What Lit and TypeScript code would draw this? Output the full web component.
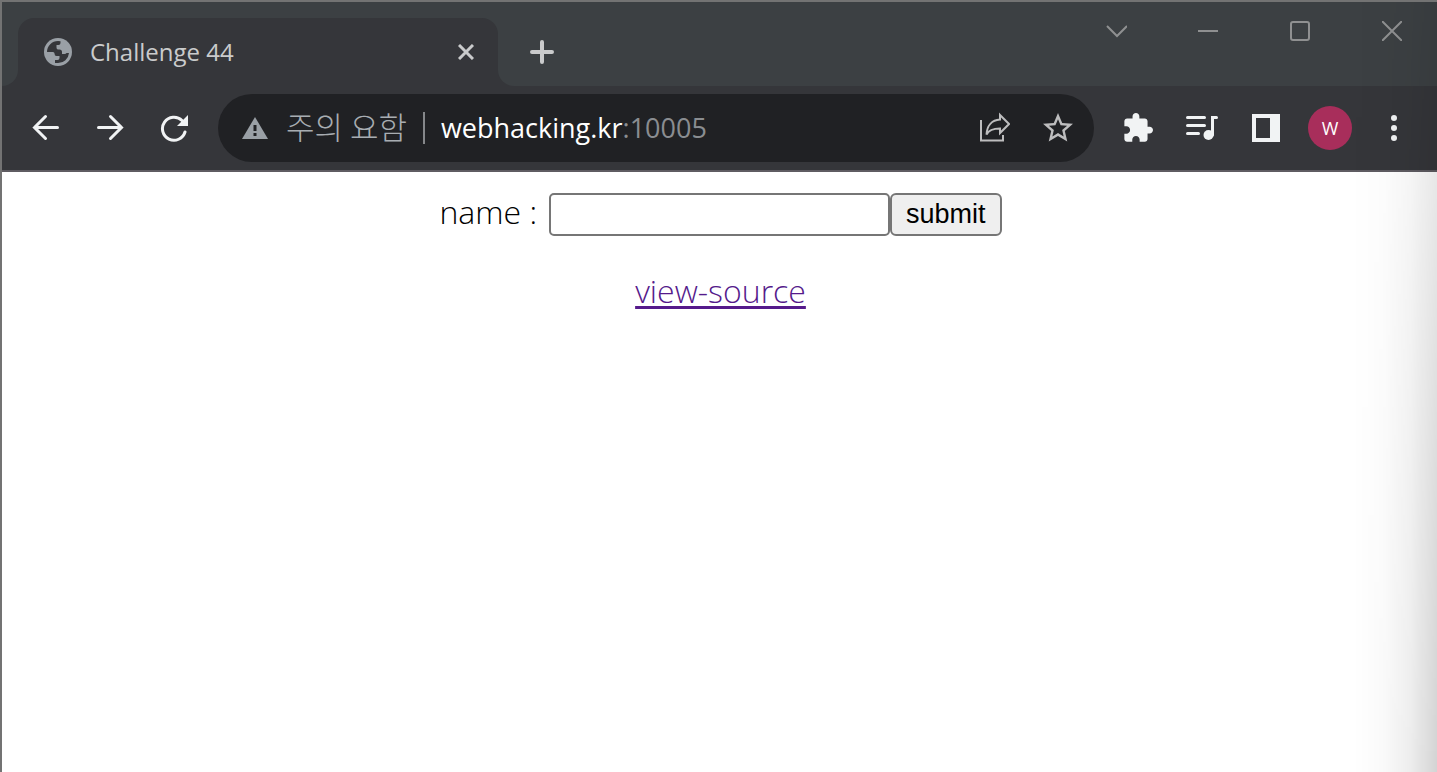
import { LitElement, html, css, svg } from "lit";
import { customElement, state } from "lit/decorators.js";

const icons = {
  globe: svg`<circle cx="14" cy="14" r="14" fill="#9aa0a6"/><path d="M3 14A11 11 0 0 1 14 3L16.500 3.300V5Q16.500 7 14.500 7H12.500V9.500Q12.500 11.500 14 11.500H15.500Q18 11.500 18 14V16H20.500Q22 16 22.500 15H25A11 11 0 0 1 14 25H11V22H13.500Q15.500 22 15.500 20V18H12.500Q10.500 18 10.500 15.500Q10.500 14 9 14Z" fill="#35363a"/>`,
};

@customElement("app-root")
export class AppRoot extends LitElement {
  @state() private name = "";

  static styles = css`
    :host {
      display: block;
      font-family: "Open Sans", "Noto Sans CJK KR", sans-serif;
    }
    * { box-sizing: border-box; }
    button { font: inherit; cursor: pointer; }
    svg { display: block; flex: none; }
    .window {
      position: relative;
      display: flex;
      flex-direction: column;
      min-height: 100vh;
      overflow: hidden;
      background: #fff;
      border: solid #737373;
      border-width: 2px 0 0 2px;
    }
    .shade {
      position: absolute;
      top: 0;
      right: 0;
      bottom: 0;
      width: 84px;
      pointer-events: none;
      background: linear-gradient(to right, rgba(0, 0, 0, 0), rgba(0, 0, 0, 0.02) 35%, rgba(0, 0, 0, 0.07) 68%, rgba(0, 0, 0, 0.17));
      -webkit-mask-image: linear-gradient(rgba(0, 0, 0, 0.4), rgba(0, 0, 0, 0.6) 30%, rgba(0, 0, 0, 0.8) 60%, #000);
      mask-image: linear-gradient(rgba(0, 0, 0, 0.4), rgba(0, 0, 0, 0.6) 30%, rgba(0, 0, 0, 0.8) 60%, #000);
    }
    .tabs {
      display: flex;
      height: 84px;
      background: linear-gradient(#3c4043 50%, #35363a 50%);
    }
    .edge {
      width: 16px;
      background: #3c4043;
      border-bottom-right-radius: 16px;
    }
    .tab {
      display: flex;
      align-items: center;
      width: 480px;
      margin-top: 16px;
      padding: 0 20px 0 26px;
      border-radius: 16px 16px 0 0;
      background: #35363a;
      color: #cacbcc;
    }
    .title {
      flex: 1;
      margin-left: 18px;
      font-size: 24px;
      line-height: 32px;
      white-space: nowrap;
    }
    .icon {
      display: flex;
      align-items: center;
      justify-content: center;
      padding: 0;
      border: 0;
      background: none;
      color: #f1f3f4;
    }
    .small { width: 24px; height: 24px; color: #cacbcc; }
    .strip {
      display: flex;
      flex: 1;
      justify-content: space-between;
      background: #3c4043;
      border-bottom-left-radius: 16px;
    }
    .add { width: 56px; margin: 16px 0 0 16px; color: #cacbcc; }
    .controls { display: flex; margin-right: -1px; }
    .control { width: 92px; height: 58px; color: #8f9091; }
    .toolbar {
      display: flex;
      align-items: center;
      height: 86px;
      padding: 0 11px 0 12px;
      background: #35363a;
      border-bottom: 2px solid #5f5c62;
    }
    .tool { width: 64px; height: 64px; }
    .address {
      display: flex;
      flex: 1;
      align-items: center;
      height: 68px;
      margin: 0 12px;
      padding: 0 4px 0 24px;
      border-radius: 34px;
      background: #202124;
    }
    .notice {
      margin-left: 18px;
      padding-bottom: 4px;
      font: 300 31px/40px "Noto Sans CJK KR", sans-serif;
      color: #a8adb2;
      white-space: nowrap;
    }
    .divider {
      width: 2px;
      height: 32px;
      margin: 0 16px;
      background: #85878a;
    }
    .url {
      flex: 1;
      font-size: 27px;
      line-height: 40px;
      color: #fff;
      white-space: nowrap;
    }
    .port { color: #8a8d91; }
    .inner { color: #bdbdbe; }
    .avatar {
      display: flex;
      align-items: center;
      justify-content: center;
      width: 44px;
      height: 44px;
      border-radius: 50%;
      background: #a82e5b;
      color: #fff;
      font-size: 18px;
      font-weight: 500;
      line-height: 24px;
    }
    .page {
      display: flex;
      flex-direction: column;
      align-items: center;
      padding: 21px 14px 21px 16px;
      font-size: 32px;
      font-weight: 300;
      line-height: 36px;
      color: #000;
    }
    form { display: flex; align-items: center; }
    label { margin-right: 12px; padding-bottom: 6px; white-space: pre; }
    .field {
      width: 341px;
      height: 43px;
      padding: 2px 4px;
      border: 2px solid #767676;
      border-radius: 5px;
      background: #fff;
      font: 27px "Liberation Sans", Arial, sans-serif;
    }
    .submit {
      height: 43px;
      padding: 0 14px 2px;
      border: 2px solid #767676;
      border-radius: 6px;
      background: #efefef;
      color: #000;
      font: 27px/36px "Liberation Sans", Arial, sans-serif;
    }
    .source {
      margin-top: 37px;
      color: #551a8b;
      text-decoration-thickness: 3px;
      text-underline-offset: 3px;
    }
  `;

  render() {
    return html`
      <div class="window">
        <div class="tabs">
          <div class="edge"></div>
          <div class="tab">
            <svg width="28" height="28" viewBox="0 0 28 28">${icons.globe}</svg>
            <span class="title">Challenge 44</span>
            <button class="icon small" aria-label="Close tab">
              <svg width="16" height="16" viewBox="0 0 16 16" fill="none" stroke="currentColor" stroke-width="3"><path d="M1 1 15 15M15 1 1 15"/></svg>
            </button>
          </div>
          <div class="strip">
            <button class="icon add" aria-label="New tab">
              <svg width="24" height="24" viewBox="0 0 24 24" stroke="currentColor" stroke-width="4" stroke-linecap="round"><path d="M12 2V22M2 12H22"/></svg>
            </button>
            <div class="controls">
              <button class="icon control" aria-label="Search tabs">
                <svg width="22" height="22" viewBox="0 0 22 22" fill="none" stroke="currentColor" stroke-width="2"><path d="M2 6 12 16 22 6"/></svg>
              </button>
              <button class="icon control" aria-label="Minimize">
                <svg width="20" height="20" viewBox="0 0 20 20" stroke="currentColor" stroke-width="2"><path d="M0 10H20"/></svg>
              </button>
              <button class="icon control" aria-label="Maximize">
                <svg width="20" height="20" viewBox="0 0 20 20" fill="none" stroke="currentColor" stroke-width="2"><rect x="1" y="1" width="18" height="18" rx="2"/></svg>
              </button>
              <button class="icon control" aria-label="Close window">
                <svg width="20" height="20" viewBox="0 0 20 20" stroke="currentColor" stroke-width="2"><path d="M0 0 20 20M20 0 0 20"/></svg>
              </button>
            </div>
          </div>
        </div>
        <div class="toolbar">
          <button class="icon tool" aria-label="Back">
            <svg width="28" height="28" viewBox="0 0 28 28" fill="none" stroke="currentColor" stroke-width="3" stroke-linecap="round"><path d="M25.500 13.500H2.500M13.500 2.500 2.500 13.500 13.500 24.500"/></svg>
          </button>
          <button class="icon tool" aria-label="Forward">
            <svg width="28" height="28" viewBox="0 0 28 28" fill="none" stroke="currentColor" stroke-width="3" stroke-linecap="round"><path d="M2.500 13.500H25.500M14.500 2.500 25.500 13.500 14.500 24.500"/></svg>
          </button>
          <button class="icon tool" aria-label="Reload">
            <svg width="28" height="28" viewBox="0 0 28 28"><path d="M22 6.500A11.500 11.500 0 1 0 25 18" fill="none" stroke="currentColor" stroke-width="3" stroke-linecap="round"/><path d="M28 1V12H17Z" fill="currentColor"/></svg>
          </button>
          <div class="address">
            <svg width="26" height="24" viewBox="0 0 26 24"><path d="M13 1 26 23H0Z" fill="#9aa0a6"/><path d="M11.500 9h3v6h-3zM11.500 17h3v3h-3z" fill="#202124"/></svg>
            <span class="notice">주의 요함</span>
            <span class="divider"></span>
            <span class="url">webhacking.kr<span class="port">:10005</span></span>
            <button class="icon tool inner" aria-label="Share">
              <svg width="32" height="32" viewBox="0 0 32 32" fill="none" stroke="currentColor" stroke-width="2"><path d="M3 8V28.500H25V23"/><path d="M22 3 31 12 22 21V16.500C15 16.500 10.500 18.500 8.500 22.500 9 13.500 14 8 22 7.500Z"/></svg>
            </button>
            <button class="icon tool inner" aria-label="Bookmark">
              <svg width="30" height="30" viewBox="2 2 20 20" fill="currentColor"><path d="M22 9.240l-7.190-.62L12 2 9.190 8.630 2 9.240l5.460 4.730L5.820 21 12 17.270 18.180 21l-1.630-7.030L22 9.240zM12 15.400l-3.760 2.270 1-4.280-3.320-2.880 4.380-.38L12 6.100l1.710 4.040 4.380.38-3.320 2.880 1 4.280L12 15.400z"/></svg>
            </button>
          </div>
          <button class="icon tool" aria-label="Extensions">
            <svg width="30" height="30" viewBox="1 1 22 22" fill="currentColor"><path d="M20.500 11H19V7c0-1.100-.9-2-2-2h-4V3.500C13 2.120 11.880 1 10.500 1S8 2.120 8 3.500V5H4c-1.100 0-1.990.9-1.990 2v3.800H3.500c1.490 0 2.700 1.210 2.700 2.700s-1.210 2.700-2.700 2.700H2V20c0 1.100.9 2 2 2h3.800v-1.500c0-1.490 1.210-2.700 2.700-2.700s2.700 1.210 2.700 2.700V22H17c1.100 0 2-.9 2-2v-4h1.500c1.380 0 2.500-1.120 2.500-2.500S21.880 11 20.500 11z"/></svg>
          </button>
          <button class="icon tool" aria-label="Media controls">
            <svg width="32" height="28" viewBox="0 0 32 28"><path d="M1.500 3.500H18.500M1.500 11.500H18.500M1.500 19.500H12.500M26.500 21V3.500H30.500" fill="none" stroke="currentColor" stroke-width="3" stroke-linecap="round"/><circle cx="22.500" cy="21" r="5" fill="currentColor"/></svg>
          </button>
          <button class="icon tool" aria-label="Side panel">
            <svg width="28" height="28" viewBox="0 0 28 28"><path d="M0 0H28V28H0ZM4 4V24H18V4Z" fill="currentColor" fill-rule="evenodd"/></svg>
          </button>
          <button class="icon tool" aria-label="Profile"><span class="avatar">W</span></button>
          <button class="icon tool" aria-label="Menu">
            <svg width="6" height="26" viewBox="0 0 6 26" fill="currentColor"><circle cx="3" cy="3" r="3"/><circle cx="3" cy="13" r="3"/><circle cx="3" cy="23" r="3"/></svg>
          </button>
        </div>
        <main class="page">
          <form @submit=${(e: Event) => e.preventDefault()}>
            <label for="name">name :</label>
            <input id="name" class="field" name="name" .value=${this.name}
              @input=${(e: Event) => (this.name = (e.target as HTMLInputElement).value)} />
            <button class="submit" type="submit">submit</button>
          </form>
          <a class="source" href="#view-source">view-source</a>
        </main>
        <div class="shade"></div>
      </div>
    `;
  }
}
